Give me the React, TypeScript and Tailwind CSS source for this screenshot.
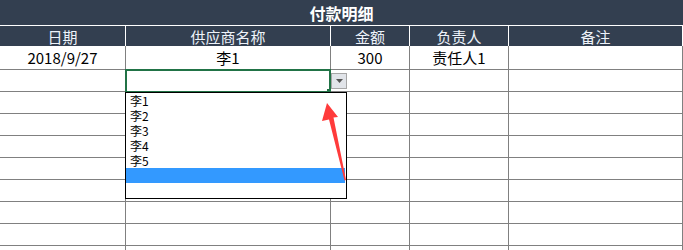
import React from "react";

const cols = ["w-[126px]", "w-[205px]", "w-[79px]", "w-[99px]", "w-[174px]"];
const headers = ["日期", "供应商名称", "金额", "负责人", "备注"];
const data = ["2018/9/27", "李1", "300", "责任人1", ""];
const items = ["李1", "李2", "李3", "李4", "李5"];

export default function App() {
  return (
    <div
      className="relative w-[683px] h-[250px] overflow-hidden bg-white"
      style={{ fontFamily: '"Noto Sans CJK SC", "Liberation Sans", sans-serif' }}
    >
      {/* title */}
      <div className="h-[26px] bg-[#333f50] border-b border-white flex items-center justify-center">
        <span className="text-[16px] font-bold text-white leading-none">付款明细</span>
      </div>
      {/* header */}
      <div className="flex h-[20px] bg-[#333f50]">
        {headers.map((h, i) => (
          <div
            key={i}
            className={`${cols[i]} shrink-0 border-r border-white flex items-center justify-center text-[15px] text-[#eef3fa] leading-none`}
          >
            {h}
          </div>
        ))}
      </div>
      {/* data row */}
      <div className="flex h-[24px] border-b border-[#808080]">
        {data.map((d, i) => (
          <div
            key={i}
            className={`${cols[i]} shrink-0 border-r border-[#808080] flex items-center justify-center text-[15px] text-black leading-none`}
          >
            {d}
          </div>
        ))}
      </div>
      {/* empty rows */}
      {Array.from({ length: 9 }).map((_, r) => (
        <div key={r} className="flex h-[22px] border-b border-[#808080]">
          {cols.map((c, i) => (
            <div key={i} className={`${c} shrink-0 border-r border-[#808080]`} />
          ))}
        </div>
      ))}

      {/* selected cell */}
      <div className="absolute left-[125px] top-[69px] w-[206px] h-[24px] border-2 border-[#217346]" />
      <div className="absolute left-[327px] top-[89px] w-[4px] h-[4px] bg-[#217346]" />

      {/* dropdown button */}
      <div className="absolute left-[331px] top-[73px] w-[16px] h-[16px] border border-[#a6a6a6] bg-[#e1e4e9] flex items-center justify-center">
        <svg width="7" height="4" viewBox="0 0 7 4">
          <polygon points="0,0 7,0 3.5,4" fill="#555" />
        </svg>
      </div>

      {/* dropdown list */}
      <div className="absolute left-[125px] top-[92px] w-[222px] h-[107px] border border-black bg-white flex flex-col">
        {items.map((t) => (
          <div key={t} className="h-[15px] pl-[4px] text-[12px] leading-[15px] text-black">
            {t}
          </div>
        ))}
        <div className="h-[15px] bg-[#3399ff] mr-[1px]" />
      </div>

      {/* red arrow */}
      <svg
        className="absolute left-0 top-0 pointer-events-none"
        width="683"
        height="250"
        viewBox="0 0 683 250"
      >
        <polygon
          points="327,103 338,117 333.5,117.5 346,180 344.5,180.5 329,119.5 322,121"
          fill="#ff3b3b"
        />
      </svg>
    </div>
  );
}
